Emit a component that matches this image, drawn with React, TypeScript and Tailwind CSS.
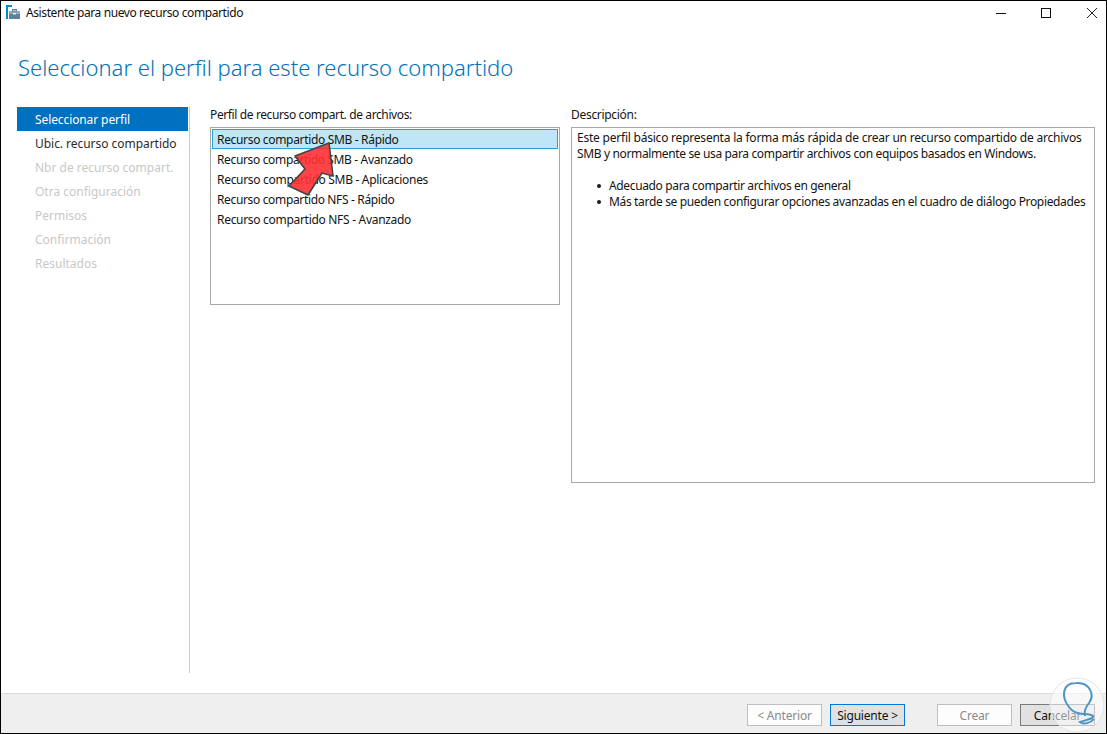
const ui = { fontFamily: '"Noto Sans", sans-serif' };

function Btn({ label, kind }: { label: string; kind: "off" | "primary" | "normal" }) {
  const cls =
    kind === "off"
      ? "border-[#bfbfbf] bg-[#fdfdfd] text-[#8a8a8a]"
      : kind === "primary"
        ? "border-[#0078d7] bg-[#e1e1e1] text-[#111]"
        : "border-[#7a7a7a] bg-[#e1e1e1] text-[#111]";
  return (
    <div className={`w-[75px] h-[22px] pt-[1px] border flex items-center justify-center text-[12px] tracking-[-0.2px] ${cls}`}>{label}</div>
  );
}

function Dot() {
  return (
    <span className="w-[32px] flex justify-end items-center pr-[8px]">
      <span className="w-[4px] h-[4px] rounded-full bg-[#1a1a1a]" />
    </span>
  );
}

export default function App() {
  const steps = [
    ["Seleccionar perfil", "bg-[#0070c0] text-white tracking-[-0.1px]"],
    ["Ubic. recurso compartido", "text-[#2b2b2b] tracking-[-0.04px]"],
    ["Nbr de recurso compart.", "text-[#c8c8c8]"],
    ["Otra configuración", "text-[#c8c8c8]"],
    ["Permisos", "text-[#c8c8c8]"],
    ["Confirmación", "text-[#c8c8c8]"],
    ["Resultados", "text-[#c8c8c8]"],
  ];
  const items = [
    ["Recurso compartido SMB - Avanzado", "tracking-[-0.35px]"],
    ["Recurso compartido SMB - Aplicaciones", "tracking-[-0.3px]"],
    ["Recurso compartido NFS - Rápido", "tracking-[-0.35px]"],
    ["Recurso compartido NFS - Avanzado", "tracking-[-0.3px]"],
  ];
  return (
    <div style={ui} className="relative w-[1107px] h-[734px] overflow-hidden bg-white border border-black flex flex-col text-[12px] text-[#141414]">
      <div className="h-[25px] shrink-0 flex items-center pl-[5px] pb-[2px]">
        <svg width="15" height="15" viewBox="0 0 15 15" className="mr-[5px]">
          <rect x="0" y="0" width="6" height="2" fill="#0a87d0" />
          <rect x="0" y="0" width="2" height="14" fill="#0a87d0" />
          <rect x="3" y="9" width="11" height="5" fill="#5f829b" />
          <rect x="3" y="6" width="11" height="3" fill="#8fa9ba" />
          <rect x="6.5" y="4.5" width="4" height="1.5" fill="none" stroke="#5f829b" />
          <rect x="7" y="8" width="3" height="1.5" fill="#e8eef2" />
        </svg>
        <span className="text-[#111] tracking-[-0.4px]">Asistente para nuevo recurso compartido</span>
        <div className="ml-auto flex items-center">
          <svg width="12" height="12" viewBox="0 0 12 12" className="mr-[33px]"><path d="M1 6.5h10" stroke="#111" /></svg>
          <svg width="12" height="12" viewBox="0 0 12 12" className="mr-[34px]"><rect x="1.5" y="1.5" width="9" height="9" fill="none" stroke="#111" /></svg>
          <svg width="12" height="12" viewBox="0 0 12 12" className="mr-[8px]"><path d="M1 1l10 10M11 1L1 11" stroke="#222" /></svg>
        </div>
      </div>
      <h1 className="h-[81px] shrink-0 pl-[17px] pt-[25px] text-[22px] font-light leading-[32px] text-[#0072bc]">
        Seleccionar el perfil para este recurso compartido
      </h1>
      <div className="flex flex-1 min-h-0 pl-[16px] pr-[11px]">
        <div className="w-[173px] shrink-0 h-[566px] border-r border-[#c8c8c8] flex flex-col">
          {steps.map(([s, c]) => (
            <div key={s} className={`h-[24px] w-[171px] shrink-0 flex items-center pl-[18px] pt-[2px] ${c}`}>{s}</div>
          ))}
        </div>
        <div className="ml-[20px] w-[350px] shrink-0 flex flex-col">
          <div className="h-[20px] flex items-start leading-[16px] tracking-[-0.38px]">Perfil de recurso compart. de archivos:</div>
          <div className="h-[178px] border border-[#a8a8a8] p-px flex flex-col">
            <div className="h-[20px] border border-[#26a0da] bg-[#bee6f5] pl-[4px] pt-[2px] flex items-center tracking-[-0.33px]">Recurso compartido SMB - Rápido</div>
            {items.map(([t, c]) => (
              <div key={t} className={`h-[20px] pl-[5px] pt-[2px] flex items-center ${c}`}>{t}</div>
            ))}
          </div>
        </div>
        <div className="ml-[11px] flex-1 flex flex-col">
          <div className="h-[20px] leading-[16px] tracking-[-0.3px]">Descripción:</div>
          <div className="h-[356px] border border-[#a8a8a8] px-[5px] pt-[2px] leading-[16px] whitespace-nowrap">
            <p className="tracking-[-0.22px]">Este perfil básico representa la forma más rápida de crear un recurso compartido de archivos</p>
            <p className="tracking-[-0.36px]">SMB y normalmente se usa para compartir archivos con equipos basados en Windows.</p>
            <ul className="mt-[16px]">
              <li className="flex tracking-[-0.36px]"><Dot />Adecuado para compartir archivos en general</li>
              <li className="flex tracking-[-0.34px]"><Dot />Más tarde se pueden configurar opciones avanzadas en el cuadro de diálogo Propiedades</li>
            </ul>
          </div>
        </div>
      </div>
      <div className="h-[40px] shrink-0 bg-[#efefef] border-t border-[#dcdcdc] flex items-start pt-[10px] justify-end pr-[11px]">
        <Btn label="< Anterior" kind="off" />
        <div className="w-[8px]" />
        <Btn label="Siguiente >" kind="primary" />
        <div className="w-[32px]" />
        <Btn label="Crear" kind="off" />
        <div className="w-[8px]" />
        <Btn label="Cancelar" kind="normal" />
      </div>
      <svg width="64" height="64" viewBox="0 0 64 64" className="absolute left-[278px] top-[133px]">
        <path d="M50 9 L16 22 L26 35 L10 52 L29 61 L43 39 L54 42 Z" fill="#ff2f33" fillOpacity="0.9" stroke="#444" strokeWidth="1.6" strokeLinejoin="round" />
      </svg>
      <svg width="60" height="59" viewBox="0 0 60 59" className="absolute left-[1046px] top-[674px]">
        <circle cx="30" cy="30" r="27" fill="#fff" fillOpacity="0.55" stroke="#dfe6ea" />
        <path d="M31 38 C27 37 24 35 22 32 C14 22 15 8 29 8 C43 7 48 20 42 28 C38 33 37 37 38 41" fill="none" stroke="#4c94c4" strokeWidth="2" />
        <path d="M31 38 C36 40 42 38 46 41 C47 44 38 45 33 47 C36 50 44 48 47 44" fill="none" stroke="#4c94c4" strokeWidth="2" />
      </svg>
    </div>
  );
}
